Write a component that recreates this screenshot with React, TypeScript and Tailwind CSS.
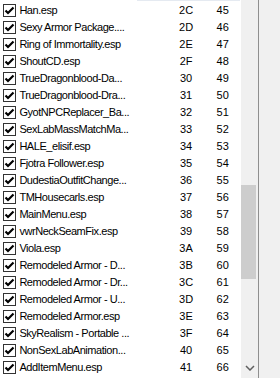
import React from "react";

const rows: [string, string, string][] = [
  ["Han.esp", "2C", "45"],
  ["Sexy Armor Package....", "2D", "46"],
  ["Ring of Immortality.esp", "2E", "47"],
  ["ShoutCD.esp", "2F", "48"],
  ["TrueDragonblood-Da...", "30", "49"],
  ["TrueDragonblood-Dra...", "31", "50"],
  ["GyotNPCReplacer_Ba...", "32", "51"],
  ["SexLabMassMatchMa...", "33", "52"],
  ["HALE_elisif.esp", "34", "53"],
  ["Fjotra Follower.esp", "35", "54"],
  ["DudestiaOutfitChange...", "36", "55"],
  ["TMHousecarls.esp", "37", "56"],
  ["MainMenu.esp", "38", "57"],
  ["vwrNeckSeamFix.esp", "39", "58"],
  ["Viola.esp", "3A", "59"],
  ["Remodeled Armor - D...", "3B", "60"],
  ["Remodeled Armor - Dr...", "3C", "61"],
  ["Remodeled Armor - U...", "3D", "62"],
  ["Remodeled Armor.esp", "3E", "63"],
  ["SkyRealism - Portable ...", "3F", "64"],
  ["NonSexLabAnimation...", "40", "65"],
  ["AddItemMenu.esp", "41", "66"],
];

function Check() {
  return (
    <div className="w-[13px] h-[13px] border border-[#333333] bg-white flex items-center justify-center shrink-0">
      <svg width="11" height="11" viewBox="0 0 11 11">
        <path d="M1.5 5.5 L4 8 L9.5 2.5" stroke="#000" strokeWidth="2.2" fill="none" />
      </svg>
    </div>
  );
}

export default function App() {
  return (
    <div
      className="w-[280px] h-[378px] flex bg-[#f0f0f0] overflow-hidden text-black"
      style={{ fontFamily: '"Liberation Sans", Arial, sans-serif' }}
    >
      <div className="w-[241px] bg-white flex flex-col">
        <div className="h-[1px] flex">
          <div className="w-[137px]" />
          <div className="w-[103px] bg-[#e5eaf1]" />
        </div>
        <div className="pt-[1px] flex flex-col">
          {rows.map(([name, idx, num]) => (
            <div key={num} className="h-[17px] flex items-center text-[11px] leading-[17px]">
              <div className="w-[20px] pl-[3px] flex items-center">
                <Check />
              </div>
              <div className="w-[154px] whitespace-nowrap overflow-hidden tracking-[-0.45px]">{name}</div>
              <div className="w-[38px] text-center">{idx}</div>
              <div className="w-[38px] text-center">{num}</div>
            </div>
          ))}
        </div>
      </div>
      <div className="w-[17px] flex flex-col bg-[#f0f0f0]">
        <div className="h-[185px]" />
        <div className="h-[94px] w-[15px] bg-[#cdcdcd]" />
        <div className="flex-1" />
        <div className="h-[17px] flex items-center justify-center pb-[4px]">
          <svg width="10" height="6" viewBox="0 0 10 6">
            <path d="M1 1 L5 5 L9 1" stroke="#606060" strokeWidth="1.5" fill="none" />
          </svg>
        </div>
      </div>
      <div className="w-[1px] bg-[#8f8f8f]" />
      <div className="flex-1 bg-[#f0f0f0]" />
    </div>
  );
}
